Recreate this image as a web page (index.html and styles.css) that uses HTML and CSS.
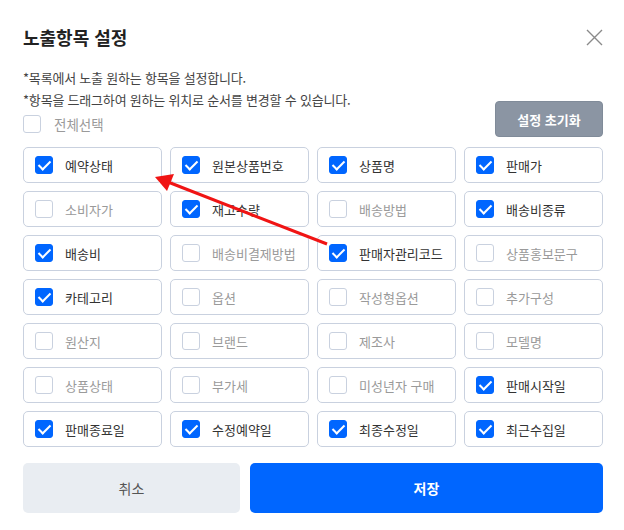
FILE: index.html
```html
<!DOCTYPE html>
<html lang="ko">
  <head>
    <meta charset="UTF-8" />
    <meta name="viewport" content="width=device-width, initial-scale=1.0" />
    <title>노출항목 설정</title>
    <link rel="stylesheet" href="styles.css">
  </head>
  <body>
    <div class="modal">
      <header class="modal-head">
        <h2>노출항목 설정</h2>
        <button type="button" class="close" aria-label="닫기">
          <svg width="17" height="17" viewBox="0 0 17 17">
            <path d="M1 1 L16 16 M16 1 L1 16" stroke="#8a8a8a" stroke-width="1.4" fill="none" />
          </svg>
        </button>
      </header>

      <div class="tools">
        <div class="guide">
          <p>*목록에서 노출 원하는 항목을 설정합니다.</p>
          <p>*항목을 드래그하여 원하는 위치로 순서를 변경할 수 있습니다.</p>
          <label class="all"><span class="box"></span>전체선택</label>
        </div>
        <button type="button" class="reset">설정 초기화</button>
      </div>

      <ul class="items">
        <li class="on"><span class="box"></span>예약상태</li>
        <li class="on"><span class="box"></span>원본상품번호</li>
        <li class="on"><span class="box"></span>상품명</li>
        <li class="on"><span class="box"></span>판매가</li>
        <li><span class="box"></span>소비자가</li>
        <li class="on"><span class="box"></span>재고수량</li>
        <li><span class="box"></span>배송방법</li>
        <li class="on"><span class="box"></span>배송비종류</li>
        <li class="on"><span class="box"></span>배송비</li>
        <li><span class="box"></span>배송비결제방법</li>
        <li class="on"><span class="box"></span>판매자관리코드</li>
        <li><span class="box"></span>상품홍보문구</li>
        <li class="on"><span class="box"></span>카테고리</li>
        <li><span class="box"></span>옵션</li>
        <li><span class="box"></span>작성형옵션</li>
        <li><span class="box"></span>추가구성</li>
        <li><span class="box"></span>원산지</li>
        <li><span class="box"></span>브랜드</li>
        <li><span class="box"></span>제조사</li>
        <li><span class="box"></span>모델명</li>
        <li><span class="box"></span>상품상태</li>
        <li><span class="box"></span>부가세</li>
        <li><span class="box"></span>미성년자 구매</li>
        <li class="on"><span class="box"></span>판매시작일</li>
        <li class="on"><span class="box"></span>판매종료일</li>
        <li class="on"><span class="box"></span>수정예약일</li>
        <li class="on"><span class="box"></span>최종수정일</li>
        <li class="on"><span class="box"></span>최근수집일</li>
      </ul>

      <footer class="actions">
        <button type="button" class="cancel">취소</button>
        <button type="button" class="save">저장</button>
      </footer>

      <!-- 드래그 안내 화살표 -->
      <svg class="arrow" width="624" height="530" viewBox="0 0 624 530">
        <line x1="327" y1="244" x2="168" y2="182" stroke="#f01414" stroke-width="3" />
        <polygon points="155,177 174,174 167,191" fill="#f01414" />
      </svg>
    </div>
  </body>
</html>
```

FILE: styles.css
```css
* {
  margin: 0;
  padding: 0;
  box-sizing: border-box;
}
body {
  width: 624px;
  height: 530px;
  background-color: #fff;
  font-family: "Noto Sans CJK KR", "Noto Sans", sans-serif;
  color: #333;
}
.modal {
  position: relative;
  height: 100%;
  padding: 0 21px 0 23px;
}
.modal-head {
  display: flex;
  justify-content: space-between;
  align-items: center;
  padding-top: 24px;
  height: 50px;
}
.modal-head h2 {
  font-size: 18px;
  font-weight: 700;
  color: #222;
  line-height: 26px;
}
.close {
  border: none;
  background: none;
  width: 17px;
  height: 17px;
  margin-top: 1px;
  cursor: pointer;
}
.close svg {
  display: block;
}
.tools {
  display: flex;
  justify-content: space-between;
  align-items: flex-end;
  margin-top: 17px;
}
.guide p {
  font-size: 13px;
  line-height: 22px;
  letter-spacing: -0.2px;
  color: #444;
}
.all {
  display: flex;
  align-items: center;
  gap: 13px;
  height: 26px;
  font-size: 13.5px;
  color: #9a9a9a;
}
.reset {
  width: 108px;
  height: 36px;
  border: 1px solid #808b99;
  border-radius: 4px;
  background-color: #8b95a3;
  color: #fff;
  font-family: inherit;
  font-size: 13px;
  font-weight: 700;
  cursor: pointer;
}
/* 노출항목 목록 : 4열 */
.items {
  list-style: none;
  display: grid;
  grid-template-columns: repeat(4, 139px);
  grid-auto-rows: 36px;
  gap: 8px;
  margin-top: 10px;
}
.items li {
  display: flex;
  align-items: center;
  gap: 12px;
  padding-left: 11px;
  border: 1px solid #c9d1df;
  border-radius: 5px;
  font-size: 13px;
  color: #9a9a9a;
  white-space: nowrap;
}
.items li.on {
  color: #333;
}
.box {
  position: relative;
  flex: 0 0 18px;
  width: 18px;
  height: 18px;
  border: 1px solid #c9d1df;
  border-radius: 3px;
  background-color: #fff;
}
.on .box {
  border-color: #0066ff;
  background-color: #0066ff;
}
.on .box::after {
  content: "";
  position: absolute;
  left: 5px;
  top: 1px;
  width: 5px;
  height: 10px;
  border-right: 2px solid #fff;
  border-bottom: 2px solid #fff;
  transform: rotate(45deg);
}
.actions {
  display: grid;
  grid-template-columns: 217px 1fr;
  gap: 10px;
  margin-top: 16px;
}
.actions button {
  height: 50px;
  border: none;
  border-radius: 5px;
  font-family: inherit;
  font-size: 14px;
  cursor: pointer;
}
.cancel {
  background-color: #e9edf2;
  color: #555;
}
.save {
  background-color: #0066ff;
  color: #fff;
  font-weight: 700;
}
.arrow {
  position: absolute;
  left: 0;
  top: 0;
  pointer-events: none;
}
```
